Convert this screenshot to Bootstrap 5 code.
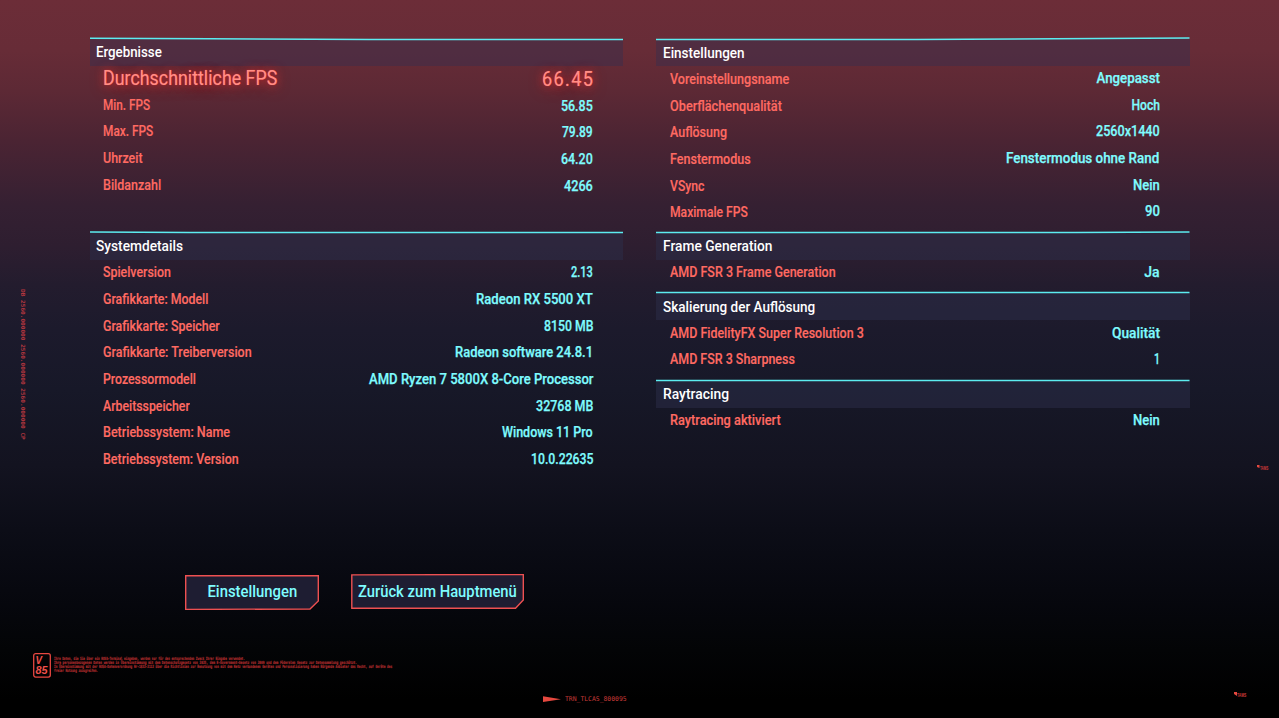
<!DOCTYPE html>
<html lang="de">
<head>
<meta charset="utf-8">
<meta name="viewport" content="width=device-width, initial-scale=1">
<title>Benchmark-Ergebnisse</title>
<link href="https://cdn.jsdelivr.net/npm/bootstrap@5.3.0/dist/css/bootstrap.min.css" rel="stylesheet">
<style>
:root{--cy:#7ffcff;--rd:#ff6a62}
body{height:718px;overflow:hidden;font-family:Roboto,"Liberation Sans",sans-serif;font-weight:500;font-size:14px;line-height:1;color:#fff;
background:linear-gradient(#6c2d38 0,#672c37 50px,#5d2935 90px,#4b2433 140px,#352032 205px,#2e1e30 245px,#231c2e 285px,#1c1a2c 330px,#171828 390px,#131320 465px,#0c0d17 530px,#07080f 590px,#030406 650px,#000 700px)}
[data-w]{display:inline-block;white-space:nowrap;transform-origin:left center}
[data-w].val{transform-origin:right center}
.hud{padding:39px 89px 0 90px;height:574px}
.hud>.row{--bs-gutter-x:33px;margin-right:-16px;margin-left:-17px}
.head{height:27px;padding:2px 7px 0;background:rgba(58,46,76,.5);font-size:14.5px}
.head.taller{height:28px;margin-bottom:-1px;background:rgba(44,46,74,.5)}
.head svg{top:-2px;left:0;width:100%;height:4px}
.head path{stroke:#5cecf0;stroke-width:1.5;fill:none}
.stats{margin:-.5px 30px 0 13.5px}
.stats li{height:26.7px}
.lbl{color:var(--rd);-webkit-text-stroke:.15px var(--rd)}
.val{color:var(--cy);-webkit-text-stroke:.25px var(--cy)}
.big .lbl,.big .val{font-size:20px;font-weight:400;color:#ff8f87;-webkit-text-stroke:0;text-shadow:0 0 1px #ff3b3b,0 0 9px rgba(255,51,51,.65),0 3px 14px #a92a2a}
.big .val{letter-spacing:1.4px;margin-right:-1px}
.up{top:-1px}
.hbtn{height:35px;color:var(--cy);font-size:17px;font-weight:500;background:none;border:0;padding:0}
.hbtn svg{inset:0;width:100%;height:100%}
.hbtn polygon{fill:#1e1d32;stroke:#ee5051;stroke-width:1.4}
.hbtn [data-w]{transform-origin:center}
.legal{font:bold 4.3px/4.1px "DejaVu Sans Mono",monospace;color:#a92b2c;-webkit-text-stroke:.2px #a92b2c}
.tiny{font:6.5px/8px "DejaVu Sans Mono",monospace;color:#c83a38}
.side{left:19px;top:289px;width:8px;height:152px;writing-mode:vertical-rl;font:bold 5.5px/8px "DejaVu Sans Mono",monospace;color:#b5363f}
.side span{display:inline-block;white-space:nowrap;transform-origin:center top}
.pin{font:bold 4.5px/6px "Liberation Sans",sans-serif;color:#d43a39}
</style>
</head>
<body class="position-relative">
<main class="hud">
<div class="row">
<section class="col-6">
  <div class="head position-relative d-flex align-items-center" style="padding-left:6px"><svg class="position-absolute" viewBox="0 0 534 4" preserveAspectRatio="none"><path d="M0 1.2 120 1.8 280 2.5H534"/></svg><span class="position-relative" data-w="66">Ergebnisse</span></div>
  <ul class="stats list-unstyled mb-0" id="results"></ul>
  <div style="height:33px"></div>
  <div class="head taller position-relative d-flex align-items-center" style="padding-left:6px"><svg class="position-absolute" viewBox="0 0 534 4" preserveAspectRatio="none"><path d="M0 2 100 2.5H534"/></svg><span data-w="87">Systemdetails</span></div>
  <ul class="stats list-unstyled mb-0" id="system"></ul>
</section>
<section class="col-6">
  <div class="head position-relative d-flex align-items-center" style="padding-top:3px"><svg class="position-absolute" viewBox="0 0 534 4" preserveAspectRatio="none"><path d="M0 2.5H260L400 1.8 534 1"/></svg><span data-w="82">Einstellungen</span></div>
  <ul class="stats list-unstyled mb-0" id="settings"></ul>
  <div style="height:6.3px"></div>
  <div class="head taller position-relative d-flex align-items-center" style="padding-top:3px"><svg class="position-absolute" viewBox="0 0 534 4" preserveAspectRatio="none"><path d="M0 2.5H420L534 1.9"/></svg><span data-w="109">Frame Generation</span></div>
  <ul class="stats list-unstyled mb-0" id="frames"></ul>
  <div style="height:6.8px"></div>
  <div class="head taller position-relative d-flex align-items-center" style="padding-top:3px"><svg class="position-absolute" viewBox="0 0 534 4" preserveAspectRatio="none"><path d="M0 2.5H534"/></svg><span data-w="152">Skalierung der Auflösung</span></div>
  <ul class="stats list-unstyled mb-0" id="scaling"></ul>
  <div style="height:7px"></div>
  <div class="head taller position-relative d-flex align-items-center" style="padding-top:3px"><svg class="position-absolute" viewBox="0 0 534 4" preserveAspectRatio="none"><path d="M0 2.5H534"/></svg><span data-w="66">Raytracing</span></div>
  <ul class="stats list-unstyled mb-0" id="rays"></ul>
</section>
</div>
</main>

<div class="d-flex align-items-start" style="padding-left:185px;height:79px">
  <button class="hbtn position-relative d-flex justify-content-center align-items-center" style="width:134px;margin-top:1px"><svg class="position-absolute" viewBox="0 0 134 35"><polygon points=".7,.7 133.3,.7 133.3,26 125,34 .7,34.4"/></svg><span class="position-relative up" data-w="90">Einstellungen</span></button>
  <button class="hbtn position-relative d-flex justify-content-center align-items-center" style="width:173px;margin-left:32px"><svg class="position-absolute" viewBox="0 0 173 35"><polygon points=".8,.9 172.3,.5 172.3,26 164.5,34.3 .8,34.3"/></svg><span class="position-relative" data-w="159">Zurück zum Hauptmenü</span></button>
</div>

<footer>
  <div class="d-flex" style="padding-left:33px;height:42px">
    <svg width="18" height="25" viewBox="0 0 18 25" fill="none" stroke="#e84741" stroke-width="1.3"><rect x=".7" y=".7" width="16.6" height="23.4" rx="2"/><g fill="#f0514a" stroke="none" font-family="Liberation Sans" font-weight="700" font-style="italic" font-size="10"><text x="2.4" y="10.8" textLength="6.5" lengthAdjust="spacingAndGlyphs">V</text><text x="2.6" y="20.9" textLength="12" lengthAdjust="spacingAndGlyphs">85</text></g></svg>
    <div class="legal" style="padding:4px 0 0 3px">
      <div><span data-w="191">Ihre Daten, die Sie über ein NOVA-Terminal eingeben, werden nur für den entsprechenden Zweck Ihrer Eingabe verwendet.</span></div>
      <div><span data-w="303">Ihre personenbezogenen Daten werden in Übereinstimmung mit dem Datenschutzgesetz von 2025, dem E-Government-Gesetz von 2009 und dem Föderalen Gesetz zur Datensammlung geschützt.</span></div>
      <div><span data-w="338">In Übereinstimmung mit der NUSA-Datenverordnung Nr-1822-2112 über die Richtlinien zur Benutzung von mit dem Netz verbundenen Geräten und Personalisierung haben Bürgende Anbieter das Recht, auf Geräte des</span></div>
      <div><span data-w="44">freier Nutzung zuzugreifen.</span></div>
    </div>
  </div>
  <div class="d-flex tiny" style="padding-left:543px;gap:4px"><svg width="18" height="8" viewBox="0 0 18 8"><path fill="#e5483f" d="M0 1.2 18 4.2 0 7Z"/></svg><span data-w="62">TRN_TLCAS_800095</span></div>
</footer>

<div class="side position-absolute"><span data-h="151">DB 2560.000000 2560.000000 2560.000000 CP</span></div>
<div class="pin position-absolute d-flex" style="left:1257px;top:465px"><svg width="3" height="4"><path fill="#e5483f" d="M0 0h2.5v3L0 2z"/></svg><span style="padding-top:1px" data-w="8">TAMS</span></div>
<div class="pin position-absolute d-flex" style="left:1234px;top:692px"><svg width="3" height="4"><path fill="#e5483f" d="M0 0h3v4L0 2z"/></svg><span style="padding-top:1px" data-w="9">TAMS</span></div>

<script src="https://cdn.jsdelivr.net/npm/bootstrap@5.3.0/dist/js/bootstrap.bundle.min.js"></script>
<script>
// Each row: label, label width, value, value width
const data={
 results:[["Durchschnittliche FPS",174,"66.45",52],["Min. FPS",47,"56.85",32],["Max. FPS",50,"79.89",31],["Uhrzeit",40,"64.20",32],["Bildanzahl",58,"4266",29]],
 system:[["Spielversion",68,"2.13",22],["Grafikkarte: Modell",105,"Radeon RX 5500 XT",117],["Grafikkarte: Speicher",117,"8150 MB",49],["Grafikkarte: Treiberversion",149,"Radeon software 24.8.1",138],["Prozessormodell",93,"AMD Ryzen 7 5800X 8-Core Processor",224],["Arbeitsspeicher",87,"32768 MB",57],["Betriebssystem: Name",127,"Windows 11 Pro",91],["Betriebssystem: Version",136,"10.0.22635",62]],
 settings:[["Voreinstellungsname",119.5,"Angepasst",63.5],["Oberflächenqualität",111.5,"Hoch",28.5],["Auflösung",57,"2560x1440",64],["Fenstermodus",80.5,"Fenstermodus ohne Rand",153],["VSync",34,"Nein",27],["Maximale FPS",78,"90",15]],
 frames:[["AMD FSR 3 Frame Generation",166,"Ja",15]],
 scaling:[["AMD FidelityFX Super Resolution 3",194,"Qualität",48],["AMD FSR 3 Sharpness",124.5,"1",6]],
 rays:[["Raytracing aktiviert",110.5,"Nein",27]]
};
for(const id in data){
 document.getElementById(id).innerHTML=data[id].map((r,i)=>
  `<li class="d-flex justify-content-between align-items-center ${id=="results"&&!i?"big":""}"><span class="lbl position-relative ${id=="results"?"up":""}" data-w="${r[1]}">${r[0]}</span><span class="val position-relative ${id=="settings"?"up":""}" data-w="${r[3]}">${r[2]}</span></li>`).join("");
}
document.querySelectorAll("[data-w]").forEach(e=>e.style.transform=`scaleX(${e.dataset.w/e.offsetWidth})`);
document.querySelectorAll("[data-h]").forEach(e=>e.style.transform=`scaleY(${e.dataset.h/e.offsetHeight})`);
</script>
</body>
</html>
